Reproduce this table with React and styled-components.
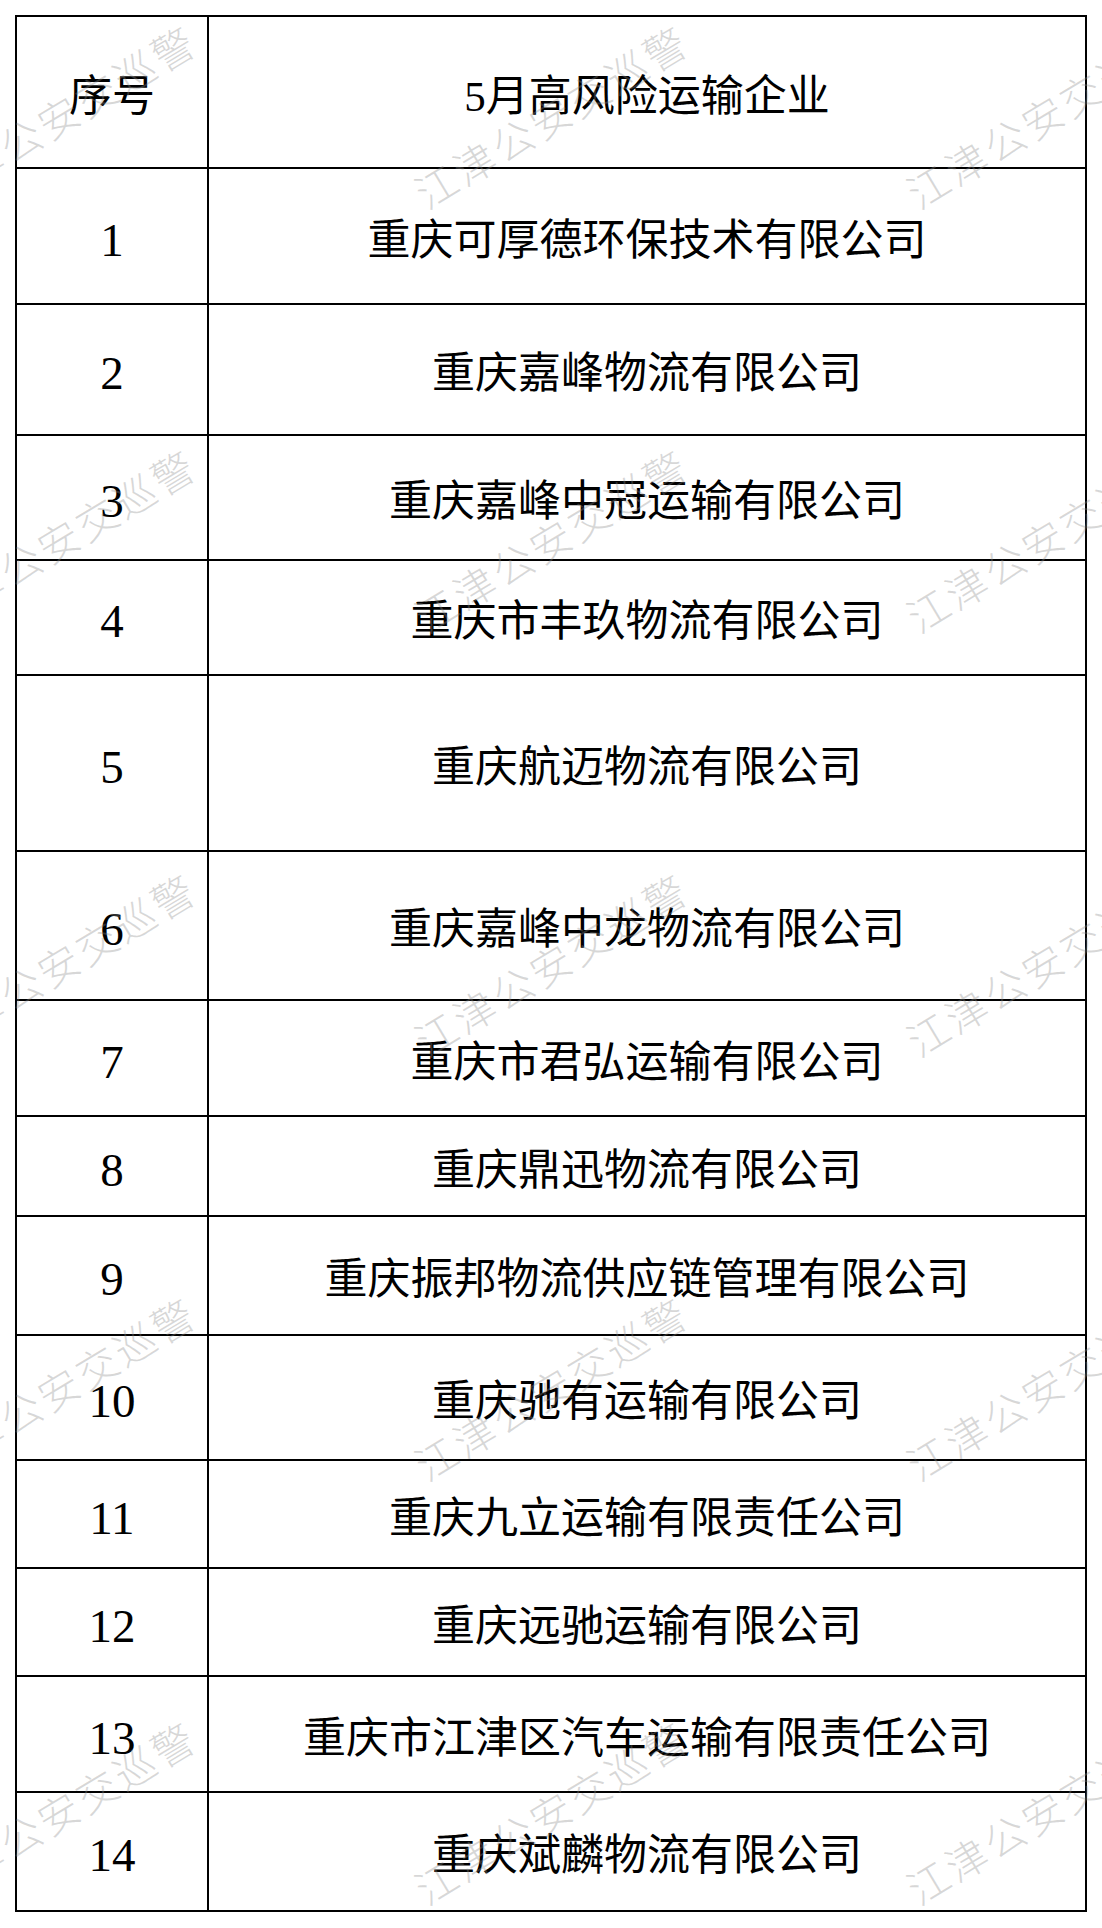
import React from 'react';
import styled, { createGlobalStyle } from 'styled-components';

const GlobalStyle = createGlobalStyle`
    html, body {
        margin: 0;
        padding: 0;
        background: #fff;
    }
`;

const Page = styled.div`
    position: relative;
    width: 1102px;
    height: 1928px;
    overflow: hidden;
    background: #fff;
    padding: 15px 0 0 15px;
    box-sizing: border-box;
    font-family: "Liberation Serif", "Noto Sans CJK SC", serif;
    color: #000;
`;

const Table = styled.div`
    display: grid;
    grid-template-columns: 192px 878px;
    width: 1072px;
    border-top: 2px solid #000;
    border-left: 2px solid #000;
    box-sizing: border-box;
`;

const Cell = styled.div`
    height: ${(p) => p.$h}px;
    box-sizing: border-box;
    border-right: 2px solid #000;
    border-bottom: 2px solid #000;
    display: flex;
    align-items: center;
    justify-content: center;
    padding-top: 8px;
    font-size: ${(p) => (p.$num ? 47 : 43)}px;
    line-height: 1;
    white-space: nowrap;
`;

const Mark = styled.span`
    position: absolute;
    transform: rotate(-31deg);
    transform-origin: 0 50%;
    font-family: "Noto Sans CJK SC", sans-serif;
    font-weight: 300;
    font-size: 41px;
    line-height: 41px;
    letter-spacing: 3.4px;
    color: rgba(140, 140, 140, 0.34);
    white-space: nowrap;
    pointer-events: none;
`;

const rows = [
    { no: '序号', name: '5月高风险运输企业', h: 152 },
    { no: '1', name: '重庆可厚德环保技术有限公司', h: 136 },
    { no: '2', name: '重庆嘉峰物流有限公司', h: 131 },
    { no: '3', name: '重庆嘉峰中冠运输有限公司', h: 125 },
    { no: '4', name: '重庆市丰玖物流有限公司', h: 115 },
    { no: '5', name: '重庆航迈物流有限公司', h: 176 },
    { no: '6', name: '重庆嘉峰中龙物流有限公司', h: 149 },
    { no: '7', name: '重庆市君弘运输有限公司', h: 116 },
    { no: '8', name: '重庆鼎迅物流有限公司', h: 100 },
    { no: '9', name: '重庆振邦物流供应链管理有限公司', h: 119 },
    { no: '10', name: '重庆驰有运输有限公司', h: 125 },
    { no: '11', name: '重庆九立运输有限责任公司', h: 108 },
    { no: '12', name: '重庆远驰运输有限公司', h: 108 },
    { no: '13', name: '重庆市江津区汽车运输有限责任公司', h: 116 },
    { no: '14', name: '重庆斌麟物流有限公司', h: 119 },
];

// watermark: centre of the first glyph of each copy
const markRows = [185, 609, 1033, 1457, 1881];
const markCols = [-56, 436, 928];

const App = () => {
    return (
        <>
            <GlobalStyle />
            <Page>
                <Table>
                    {rows.map((r, i) => (
                        <React.Fragment key={r.no}>
                            <Cell $h={r.h} $num={i > 0}>{r.no}</Cell>
                            <Cell $h={r.h}>{r.name}</Cell>
                        </React.Fragment>
                    ))}
                </Table>
                {markRows.map((y) =>
                    markCols.map((x) => (
                        <Mark key={`${x}-${y}`} style={{ left: x - 18, top: y - 10 }}>
                            江津公安交巡警
                        </Mark>
                    ))
                )}
            </Page>
        </>
    );
};

export default App;
